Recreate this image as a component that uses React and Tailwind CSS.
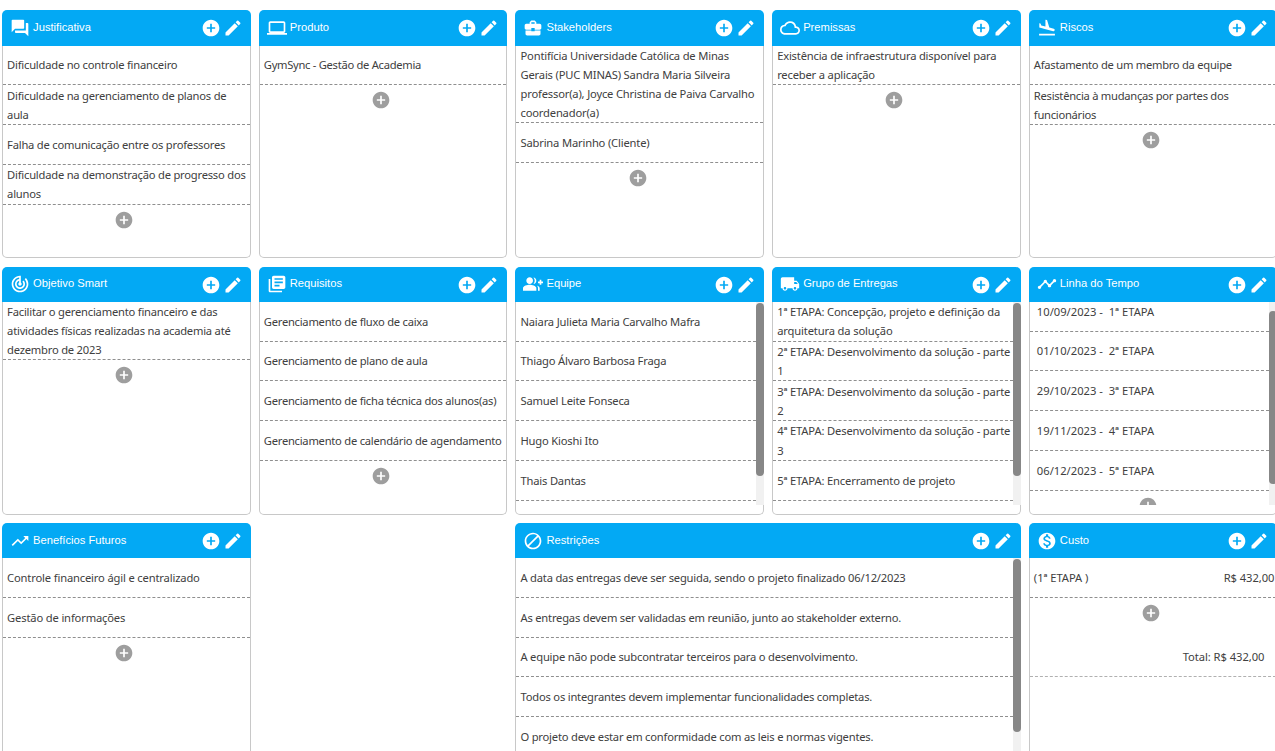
import React from "react";
import {
  MdForum,
  MdLaptop,
  MdBusinessCenter,
  MdCloudQueue,
  MdFlightLand,
  MdTrackChanges,
  MdLibraryBooks,
  MdGroupAdd,
  MdLocalShipping,
  MdTimeline,
  MdTrendingUp,
  MdBlock,
  MdMonetizationOn,
  MdAddCircle,
  MdEdit,
} from "react-icons/md";

function Card({ icon: Icon, title, className = "tracking-[-0.22px]", children }) {
  return (
    <section className={`flex h-[248px] min-w-0 flex-col ${className}`}>
      <header className="flex h-[35.25px] shrink-0 items-center rounded-t-[5px] bg-[#03a9f4] pl-2 pr-2 tracking-normal text-white">
        <Icon className="size-5 shrink-0" />
        <h2 className="ml-[3px] flex-1 pb-[2px] text-[11.2px] leading-4">{title}</h2>
        <MdAddCircle className="mt-[1px] size-5" />
        <MdEdit className="ml-[2px] mt-[1px] size-5" />
      </header>
      <div className="min-h-0 flex-1 rounded-b-[5px] border border-t-0 border-[#c8c8c8] pb-[9px]">
        {children}
      </div>
    </section>
  );
}

function Row({ lines, className = "pl-1" }) {
  return (
    <li
      className={`flex min-h-[39.75px] flex-col justify-center whitespace-nowrap border-b border-dashed border-[#8f8f8f] ${className}`}
    >
      {lines.map((line) => (
        <span key={line} className="block h-[19.2px]">
          {line}
        </span>
      ))}
    </li>
  );
}

function AddButton() {
  return (
    <div className="flex h-[39px] shrink-0 justify-center pr-[4px] pt-[5px] text-[#9e9e9e]">
      <MdAddCircle className="size-5" />
    </div>
  );
}

function List({ rows, rowClass, add = true }) {
  return (
    <ul className="min-w-0 flex-1">
      {rows.map((lines) => (
        <Row key={lines[0]} lines={lines} className={rowClass} />
      ))}
      {add && <AddButton />}
    </ul>
  );
}

function Scroller({ thumbClass = "mt-[1px]", children }) {
  return (
    <div className="-mr-px flex h-[203px] overflow-hidden">
      {children}
      <div className="flex w-2 shrink-0 flex-col bg-[#f1f1f1]">
        <div className={`h-[173px] rounded-full bg-[#878787] ${thumbClass}`} />
      </div>
    </div>
  );
}

export default function App() {
  return (
    <main className="h-[751px] w-full overflow-hidden bg-white pl-[2.1px] pt-[10.35px] font-['Liberation_Sans',sans-serif]">
      <div className="grid grid-cols-[repeat(5,248.6px)] gap-x-[8.1px] gap-y-[8.3px] [&_ul]:font-['Noto_Sans',sans-serif] [&_ul]:text-[11.2px] [&_ul]:leading-[19.2px] [&_ul]:text-[#404040]">
        <Card icon={MdForum} title="Justificativa">
          <List
            rows={[
              ["Dificuldade no controle financeiro"],
              ["Dificuldade na gerenciamento de planos de", "aula"],
              ["Falha de comunicação entre os professores"],
              ["Dificuldade na demonstração de progresso dos", "alunos"],
            ]}
          />
        </Card>
        <Card icon={MdLaptop} title="Produto" className="tracking-[-0.29px]">
          <List rows={[["GymSync - Gestão de Academia"]]} />
        </Card>
        <Card icon={MdBusinessCenter} title="Stakeholders" className="tracking-[-0.18px]">
          <List
            rows={[
              [
                "Pontifícia Universidade Católica de Minas",
                "Gerais (PUC MINAS) Sandra Maria Silveira",
                "professor(a), Joyce Christina de Paiva Carvalho",
                "coordenador(a)",
              ],
              ["Sabrina Marinho (Cliente)"],
            ]}
          />
        </Card>
        <Card icon={MdCloudQueue} title="Premissas" className="tracking-[-0.19px]">
          <List rows={[["Existência de infraestrutura disponível para", "receber a aplicação"]]} />
        </Card>
        <Card icon={MdFlightLand} title="Riscos" className="tracking-[-0.27px]">
          <List
            rows={[
              ["Afastamento de um membro da equipe"],
              ["Resistência à mudanças por partes dos", "funcionários"],
            ]}
          />
        </Card>

        <Card icon={MdTrackChanges} title="Objetivo Smart">
          <List
            rows={[
              [
                "Facilitar o gerenciamento financeiro e das",
                "atividades físicas realizadas na academia até",
                "dezembro de 2023",
              ],
            ]}
          />
        </Card>
        <Card icon={MdLibraryBooks} title="Requisitos" className="tracking-[-0.25px]">
          <List
            rows={[
              ["Gerenciamento de fluxo de caixa"],
              ["Gerenciamento de plano de aula"],
              ["Gerenciamento de ficha técnica dos alunos(as)"],
              ["Gerenciamento de calendário de agendamento"],
            ]}
          />
        </Card>
        <Card icon={MdGroupAdd} title="Equipe" className="tracking-[-0.19px]">
          <Scroller>
            <List
              add={false}
              rows={[
                ["Naiara Julieta Maria Carvalho Mafra"],
                ["Thiago Álvaro Barbosa Fraga"],
                ["Samuel Leite Fonseca"],
                ["Hugo Kioshi Ito"],
                ["Thais Dantas"],
              ]}
            />
          </Scroller>
        </Card>
        <Card icon={MdLocalShipping} title="Grupo de Entregas" className="tracking-[-0.15px]">
          <Scroller>
            <List
              add={false}
              rows={[
                ["1ª ETAPA: Concepção, projeto e definição da", "arquitetura da solução"],
                ["2ª ETAPA: Desenvolvimento da solução - parte", "1"],
                ["3ª ETAPA: Desenvolvimento da solução - parte", "2"],
                ["4ª ETAPA: Desenvolvimento da solução - parte", "3"],
                ["5ª ETAPA: Encerramento de projeto"],
              ]}
            />
          </Scroller>
        </Card>
        <Card icon={MdTimeline} title="Linha do Tempo" className="tracking-normal">
          <Scroller thumbClass="mt-[9px]">
            <div className="-mt-[10px] min-w-0 flex-1">
              <List
                rowClass="pl-[7px] whitespace-pre"
                rows={[
                  ["10/09/2023 -  1ª ETAPA"],
                  ["01/10/2023 -  2ª ETAPA"],
                  ["29/10/2023 -  3ª ETAPA"],
                  ["19/11/2023 -  4ª ETAPA"],
                  ["06/12/2023 -  5ª ETAPA"],
                ]}
              />
            </div>
          </Scroller>
        </Card>

        <Card icon={MdTrendingUp} title="Benefícios Futuros" className="tracking-[-0.16px]">
          <List rows={[["Controle financeiro ágil e centralizado"], ["Gestão de informações"]]} />
        </Card>
        <Card
          icon={MdBlock}
          title="Restrições"
          className="col-span-2 col-start-3 tracking-[-0.21px]"
        >
          <Scroller>
            <List
              add={false}
              rows={[
                ["A data das entregas deve ser seguida, sendo o projeto finalizado 06/12/2023"],
                ["As entregas devem ser validadas em reunião, junto ao stakeholder externo."],
                ["A equipe não pode subcontratar terceiros para o desenvolvimento."],
                ["Todos os integrantes devem implementar funcionalidades completas."],
                ["O projeto deve estar em conformidade com as leis e normas vigentes."],
              ]}
            />
          </Scroller>
        </Card>
        <Card icon={MdMonetizationOn} title="Custo" className="tracking-[-0.05px]">
          <ul>
            <li className="flex h-[39.75px] items-center justify-between border-b border-dashed border-[#8f8f8f] pl-1 pr-[2px]">
              <span>(1ª ETAPA )</span>
              <span>R$ 432,00</span>
            </li>
            <AddButton />
            <li className="flex h-[39.75px] items-center justify-end border-b border-dashed border-[#b0b0b0] pr-[12px]">
              Total: R$ 432,00
            </li>
          </ul>
        </Card>
      </div>
    </main>
  );
}
